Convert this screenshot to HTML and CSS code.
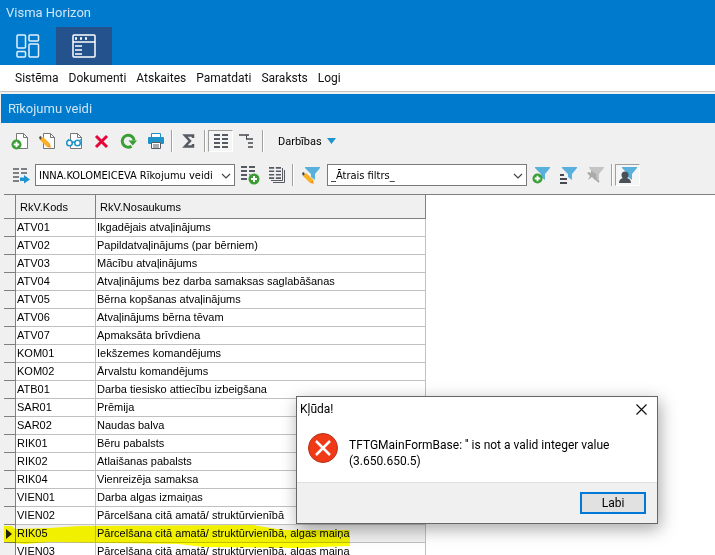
FILE: index.html
```html
<!DOCTYPE html>
<html lang="lv">
<head>
    <meta charset="UTF-8">
    <meta name="viewport" content="width=device-width, initial-scale=1.0">
    <title>Visma Horizon</title>
    <link rel="stylesheet" href="styles.css">
</head>
<body>
    <!-- Shared icon parts -->
    <svg class="sprite" aria-hidden="true">
        <symbol id="page" viewBox="0 0 20 20">
            <path d="M5.5 2.5h7l4 4v11h-11z" fill="#fff" stroke="#777"/>
            <path d="M12.5 2.5v4h4" fill="none" stroke="#777"/>
        </symbol>
        <symbol id="plus" viewBox="0 0 12 12">
            <circle cx="6" cy="6" r="5.500" fill="#3a9e35"/>
            <path d="M6 3v6M3 6h6" stroke="#fff" stroke-width="2"/>
        </symbol>
        <symbol id="pencil" viewBox="0 0 12 12">
            <path d="M0 1l2-1 1 3-2 1z" fill="#444"/>
            <path d="M1 4L4 1l7 6.500v3.500H8z" fill="#fcb026"/>
            <path d="M8.500 11l2.500-3 .8 3.800z" fill="#f6901e"/>
        </symbol>
        <symbol id="funnel" viewBox="0 0 16 16">
            <path d="M1 1h15v1l-5 6v6l-4-3V8L1 2z" fill="currentColor"/>
        </symbol>
        <symbol id="list" viewBox="0 0 14 14">
            <path d="M0 1h6M8 1h6M0 5h6M8 5h6M0 9h6M8 9h6M0 13h6M8 13h6" stroke="#555b63" stroke-width="1.800"/>
        </symbol>
        <symbol id="chevron" viewBox="0 0 10 6">
            <path d="M1 1l4 4 4-4" fill="none" stroke="#444" stroke-width="1.200"/>
        </symbol>
    </svg>

    <header class="app-header">
        <div class="app-title">Visma Horizon</div>
        <div class="app-tabs">
            <button class="app-tab" aria-label="Darbvirsma">
                <svg width="24" height="24" viewBox="0 0 24 24" fill="none" stroke="#e5f1fa" stroke-width="1.500">
                    <rect x="1" y="1" width="8.500" height="13" rx="1"/>
                    <rect x="13" y="1" width="9.500" height="6" rx="1"/>
                    <rect x="1" y="17.500" width="8.500" height="5.500" rx="1"/>
                    <rect x="13" y="10" width="9.500" height="13" rx="1"/>
                </svg>
            </button>
            <button class="app-tab active" aria-label="Logs">
                <svg width="24" height="24" viewBox="0 0 24 24" fill="none" stroke="#fff" stroke-width="1.500">
                    <rect x="1" y="1" width="22" height="22" rx="1"/>
                    <path d="M1 8h22"/>
                    <path d="M3 12h7M3 16h7M3 20h7" stroke-width="1.300"/>
                    <path d="M3 4.500h2M8 4.500h2M13 4.500h2" stroke-width="2.500"/>
                </svg>
            </button>
        </div>
    </header>

    <nav class="menu">
        <a href="#">Sistēma</a>
        <a href="#">Dokumenti</a>
        <a href="#">Atskaites</a>
        <a href="#">Pamatdati</a>
        <a href="#">Saraksts</a>
        <a href="#">Logi</a>
    </nav>

    <main class="window">
        <h1 class="window-title">Rīkojumu veidi</h1>

        <div class="toolbars">
            <div class="toolbar">
                <button class="tool" aria-label="Jauns">
                    <svg width="20" height="20"><use href="#page" width="20" height="20"/><use href="#plus" x="0" y="8" width="11" height="11"/></svg>
                </button>
                <button class="tool" aria-label="Labot">
                    <svg width="20" height="20"><use href="#page" width="20" height="20"/><use href="#pencil" x="1" y="5" width="12" height="12"/></svg>
                </button>
                <button class="tool" aria-label="Skatīt">
                    <svg width="20" height="20"><use href="#page" width="20" height="20"/>
                        <path d="M2 10l2-2M16 10l-1-2" stroke="#1d93c9" fill="none"/>
                        <g fill="#fff" stroke="#1d93c9" stroke-width="1.500"><circle cx="4.500" cy="12" r="2.800"/><circle cx="12.500" cy="12" r="2.800"/><path d="M7 12q1.500-2 3 0" fill="none"/></g>
                    </svg>
                </button>
                <button class="tool" aria-label="Dzēst">
                    <svg width="20" height="20"><path d="M4 5l11 11M15 5L4 16" stroke="#e4063a" stroke-width="3"/></svg>
                </button>
                <button class="tool" aria-label="Atjaunot">
                    <svg width="20" height="20"><path d="M12.500 15.200a6 6 0 1 1 2.700-5.700" fill="none" stroke="#3a9e35" stroke-width="3"/><path d="M9.500 9.500h8.500l-4.200 5z" fill="#3a9e35"/></svg>
                </button>
                <button class="tool" aria-label="Drukāt">
                    <svg width="20" height="20"><path d="M5.500 7V2.500h9V7" fill="#fff" stroke="#1d93c9"/><path d="M3 6h14q1 0 1 1v5q0 1-1 1H3q-1 0-1-1V7q0-1 1-1z" fill="#1d93c9"/><path d="M5.500 11.500h9v6h-9z" fill="#fff" stroke="#555b63"/><path d="M7 14h6M7 16h6" stroke="#555b63"/></svg>
                </button>
                <span class="separator"></span>
                <button class="tool" aria-label="Summa">
                    <svg width="20" height="20"><path d="M14 7V4.500H6L11 10l-5 5.500h8V13" fill="none" stroke="#555b63" stroke-width="2.500"/></svg>
                </button>
                <span class="separator"></span>
                <button class="tool pressed" aria-label="Saraksts" aria-pressed="true">
                    <svg width="14" height="14"><use href="#list" width="14" height="14"/></svg>
                </button>
                <button class="tool" aria-label="Koks">
                    <svg width="20" height="20"><path d="M2 4h10M9 8h7M11 12h5M11 16h5" stroke="#444a50" stroke-width="1.500"/><path d="M9.500 4v4" stroke="#444a50"/></svg>
                </button>
                <span class="separator"></span>
                <button class="actions">Darbības
                    <svg width="9" height="6"><path d="M0 0h9L4.500 6z" fill="#1d93d2"/></svg>
                </button>
            </div>

            <div class="toolbar">
                <button class="tool" aria-label="Kolonnas">
                    <svg width="20" height="20"><path d="M2 4h6M10 4h6M2 8h6M10 8h6M2 12h6M2 16h6" stroke="#555b63" stroke-width="1.500"/><path d="M9 12.500h4V10l6 4.500-6 4v-2.500H9z" fill="#1d93d2"/></svg>
                </button>
                <div class="combo">
                    <select aria-label="Skats"><option>INNA.KOLOMEICEVA Rīkojumu veidi</option></select>
                    <svg width="10" height="6"><use href="#chevron" width="10" height="6"/></svg>
                </div>
                <button class="tool" aria-label="Pievienot skatu">
                    <svg width="20" height="20"><use href="#list" x="1" y="1" width="14" height="14"/><circle cx="14" cy="14" r="6" fill="#f0f0f0"/><use href="#plus" x="8" y="8" width="12" height="12"/></svg>
                </button>
                <button class="tool" aria-label="Skati">
                    <svg width="20" height="20"><use href="#list" x="2" y="2" width="12" height="12"/><path d="M15.500 3v12.500H4M17.500 5v12.500H6" fill="none" stroke="#555b63"/></svg>
                </button>
                <span class="separator"></span>
                <button class="tool wide" aria-label="Labot filtru">
                    <svg width="20" height="20" class="blue"><use href="#funnel" x="3" y="1" width="16" height="16"/><use href="#pencil" x="1" y="7" width="12" height="12"/></svg>
                </button>
                <div class="combo">
                    <select aria-label="Filtrs"><option>_Ātrais filtrs_</option></select>
                    <svg width="10" height="6"><use href="#chevron" width="10" height="6"/></svg>
                </div>
                <button class="tool" aria-label="Pievienot filtru">
                    <svg width="20" height="20" class="blue"><use href="#funnel" x="2" y="1" width="16" height="16"/><use href="#plus" x="0" y="8" width="11" height="11"/></svg>
                </button>
                <button class="tool" aria-label="Filtru saraksts">
                    <svg width="20" height="20" class="blue"><use href="#funnel" x="2" y="1" width="16" height="16"/><path d="M1 10h4M1 14h7M1 18h7" stroke="#444a50" stroke-width="2"/></svg>
                </button>
                <button class="tool" aria-label="Piespraust filtru" disabled>
                    <svg width="20" height="20" class="gray"><use href="#funnel" x="2" y="1" width="16" height="16"/><path d="M5 5l6 5-1 1 1 2-2 2-3-3-4 3 2-4-3-3 2-1 2 1z" fill="#aaa"/><path d="M9 13l4 4" stroke="#aaa" stroke-width="2"/></svg>
                </button>
                <span class="separator"></span>
                <button class="tool pressed" aria-label="Mans filtrs" aria-pressed="true">
                    <svg width="20" height="20" class="blue"><use href="#funnel" x="3" y="1" width="16" height="16"/><circle cx="7" cy="10" r="3.500" fill="#4a5058"/><path d="M1 18q0-4 4-5h4q4 1 4 5z" fill="#4a5058"/></svg>
                </button>
            </div>
        </div>

        <div class="grid">
            <table>
                <thead>
                    <tr><th class="marker"></th><th>RkV.Kods</th><th>RkV.Nosaukums</th></tr>
                </thead>
                <tbody>
                    <tr><td class="marker"></td><td>ATV01</td><td>Ikgadējais atvaļinājums</td></tr>
                    <tr><td class="marker"></td><td>ATV02</td><td>Papildatvaļinājums (par bērniem)</td></tr>
                    <tr><td class="marker"></td><td>ATV03</td><td>Mācību atvaļinājums</td></tr>
                    <tr><td class="marker"></td><td>ATV04</td><td>Atvaļinājums bez darba samaksas saglabāšanas</td></tr>
                    <tr><td class="marker"></td><td>ATV05</td><td>Bērna kopšanas atvaļinājums</td></tr>
                    <tr><td class="marker"></td><td>ATV06</td><td>Atvaļinājums bērna tēvam</td></tr>
                    <tr><td class="marker"></td><td>ATV07</td><td>Apmaksāta brīvdiena</td></tr>
                    <tr><td class="marker"></td><td>KOM01</td><td>Iekšzemes komandējums</td></tr>
                    <tr><td class="marker"></td><td>KOM02</td><td>Ārvalstu komandējums</td></tr>
                    <tr><td class="marker"></td><td>ATB01</td><td>Darba tiesisko attiecību izbeigšana</td></tr>
                    <tr><td class="marker"></td><td>SAR01</td><td>Prēmija</td></tr>
                    <tr><td class="marker"></td><td>SAR02</td><td>Naudas balva</td></tr>
                    <tr><td class="marker"></td><td>RIK01</td><td>Bēru pabalsts</td></tr>
                    <tr><td class="marker"></td><td>RIK02</td><td>Atlaišanas pabalsts</td></tr>
                    <tr><td class="marker"></td><td>RIK04</td><td>Vienreizēja samaksa</td></tr>
                    <tr><td class="marker"></td><td>VIEN01</td><td>Darba algas izmaiņas</td></tr>
                    <tr><td class="marker"></td><td>VIEN02</td><td>Pārcelšana citā amatā/ struktūrvienībā</td></tr>
                    <tr class="selected">
                        <td class="marker">
                            <svg width="6" height="10"><path d="M0 0l6 5-6 5z" fill="#222"/></svg>
                            <svg class="highlight" width="352" height="26" viewBox="0 0 352 26"><path d="M0 3h10l3 3 34-1 30-2 174-1 30 5h67v16l-32 1-15 1-99-1-26-3-65-1-62-1-26 2-21-2H2z" fill="#ff0"/></svg>
                        </td>
                        <td>RIK05</td><td>Pārcelšana citā amatā/ struktūrvienībā, algas maiņa</td>
                    </tr>
                    <tr><td class="marker"></td><td>VIEN03</td><td>Pārcelšana citā amatā/ struktūrvienībā, algas maiņa</td></tr>
                </tbody>
            </table>
        </div>
    </main>

    <div class="dialog" role="alertdialog" aria-labelledby="dialog-title" aria-describedby="dialog-text">
        <div class="dialog-header">
            <span id="dialog-title">Kļūda!</span>
            <button class="dialog-close" aria-label="Aizvērt">
                <svg width="11" height="11"><path d="M.5.5l10 10M10.500.5l-10 10" stroke="#111" stroke-width="1.200"/></svg>
            </button>
        </div>
        <div class="dialog-body">
            <svg width="30" height="30"><circle cx="15" cy="15" r="14.500" fill="#f03a17" stroke="#b5301a"/><path d="M8 8l14 14M22 8L8 22" stroke="#fff" stroke-width="2.500"/></svg>
            <p id="dialog-text">TFTGMainFormBase: '' is not a valid integer value<br>(3.650.650.5)</p>
        </div>
        <div class="dialog-footer">
            <button class="btn">Labi</button>
        </div>
    </div>
</body>
</html>
```
FILE: styles.css
```css
* {
    box-sizing: border-box;
}

body {
    margin: 0;
    height: 100vh;
    display: flex;
    flex-direction: column;
    overflow: hidden;
    background: #f0f0f0;
    color: #000;
    font-family: Roboto, "Open Sans", sans-serif;
    font-size: 12px;
}

button,
select {
    margin: 0;
    padding: 0;
    border: none;
    background: none;
    color: inherit;
    font: inherit;
}

svg {
    display: block;
    flex: none;
}

.sprite {
    position: absolute;
    width: 0;
    height: 0;
}

.app-header {
    flex: none;
    background: #007acc;
    color: #cfe5f5;
}

.app-title {
    height: 27px;
    padding-left: 6px;
    font-size: 13px;
    line-height: 26px;
}

.app-tabs {
    display: flex;
}

.app-tab {
    display: flex;
    align-items: center;
    justify-content: center;
    width: 56px;
    height: 38px;
}

.app-tab.active {
    background: #24528c;
}

.menu {
    display: flex;
    flex: none;
    gap: 10px;
    padding-left: 15px;
    border-bottom: 1px solid #c4c4c4;
    background: #fff;
    line-height: 26px;
}

.menu a {
    color: #111;
    text-decoration: none;
}

.window {
    display: flex;
    flex: 1;
    flex-direction: column;
    min-height: 0;
    padding: 2px 0 0 1px;
}

.window-title {
    flex: none;
    margin: 0;
    padding-left: 7px;
    background: #007acc;
    color: #cfe5f5;
    font-size: 13px;
    font-weight: normal;
    line-height: 29px;
}

.toolbars {
    flex: none;
    padding: 1px 0 2px 6px;
}

.toolbar {
    display: flex;
    align-items: center;
    height: 34px;
}

.tool {
    display: flex;
    flex: none;
    align-items: center;
    justify-content: center;
    width: 27px;
    height: 22px;
}

.tool.wide {
    width: 30px;
}

.tool.pressed {
    width: 25px;
    border: 1px solid #fff;
    border-top-color: #a0a0a0;
    border-left-color: #a0a0a0;
    background: #f5f5f5;
}

.blue {
    color: #57b1dc;
}

.gray {
    color: #c4c4c4;
}

.separator {
    width: 2px;
    height: 22px;
    margin: 0 2px;
    border-left: 1px solid #a0a0a0;
    border-right: 1px solid #fff;
}

.actions {
    display: flex;
    align-items: center;
    gap: 5px;
    margin-left: 12px;
    font-size: 11px;
}

.combo {
    position: relative;
    flex: none;
    width: 200px;
    margin: 0 1px;
}

.combo select {
    width: 100%;
    height: 22px;
    padding: 0 18px 0 3px;
    border: 1px solid #7a7a7a;
    border-radius: 0;
    appearance: none;
    background: #fff;
    font-family: "DejaVu Sans Condensed", "DejaVu Sans", sans-serif;
    font-size: 11px;
}

.combo svg {
    position: absolute;
    top: 9px;
    right: 4px;
    pointer-events: none;
}

.grid {
    flex: 1;
    min-height: 0;
    margin-left: 3px;
    overflow: hidden;
    border-top: 1px solid #808080;
    background: #fff;
}

table {
    width: 422px;
    table-layout: fixed;
    border-spacing: 0;
    font-family: "Liberation Sans", Arial, sans-serif;
    font-size: 11px;
    white-space: nowrap;
}

th,
td {
    padding: 0 0 0 1px;
    border-right: 1px solid #c0c0c0;
    border-bottom: 1px solid #c0c0c0;
    text-align: left;
}

th {
    width: 80px;
    height: 24px;
    padding-left: 4px;
    border-color: #808080;
    background: #f0f0f0;
    font-weight: normal;
}

th:last-child {
    width: auto;
}

td {
    height: 18px;
    line-height: 17px;
}

.marker {
    position: relative;
    width: 12px;
    padding-left: 2px;
    border-color: #808080;
    background: #f0f0f0;
}

.selected td {
    background: #f0f0f0;
}

/* marker pen stroke over the selected row */
.highlight {
    position: absolute;
    top: -2px;
    left: -2px;
    z-index: 1;
    mix-blend-mode: multiply;
    pointer-events: none;
}

.dialog {
    position: absolute;
    top: 396px;
    left: 296px;
    z-index: 2;
    width: 362px;
    border: 1px solid #666;
    background: #fff;
    box-shadow: 2px 5px 16px rgba(0, 0, 0, 0.35);
}

.dialog-header {
    display: flex;
    align-items: center;
    justify-content: space-between;
    height: 24px;
    padding: 0 10px 0 3px;
}

.dialog-body {
    display: flex;
    gap: 11px;
    height: 61px;
    padding: 12px 11px;
}

.dialog-body p {
    margin: 4px 0 0;
    line-height: 16px;
}

.dialog-footer {
    display: flex;
    justify-content: flex-end;
    padding: 9px 11px;
    border-top: 1px solid #dfdfdf;
    background: #f0f0f0;
}

.btn {
    width: 66px;
    height: 22px;
    border: 2px solid #0078d7;
    background: #e1e1e1;
    line-height: 16px;
}
```
